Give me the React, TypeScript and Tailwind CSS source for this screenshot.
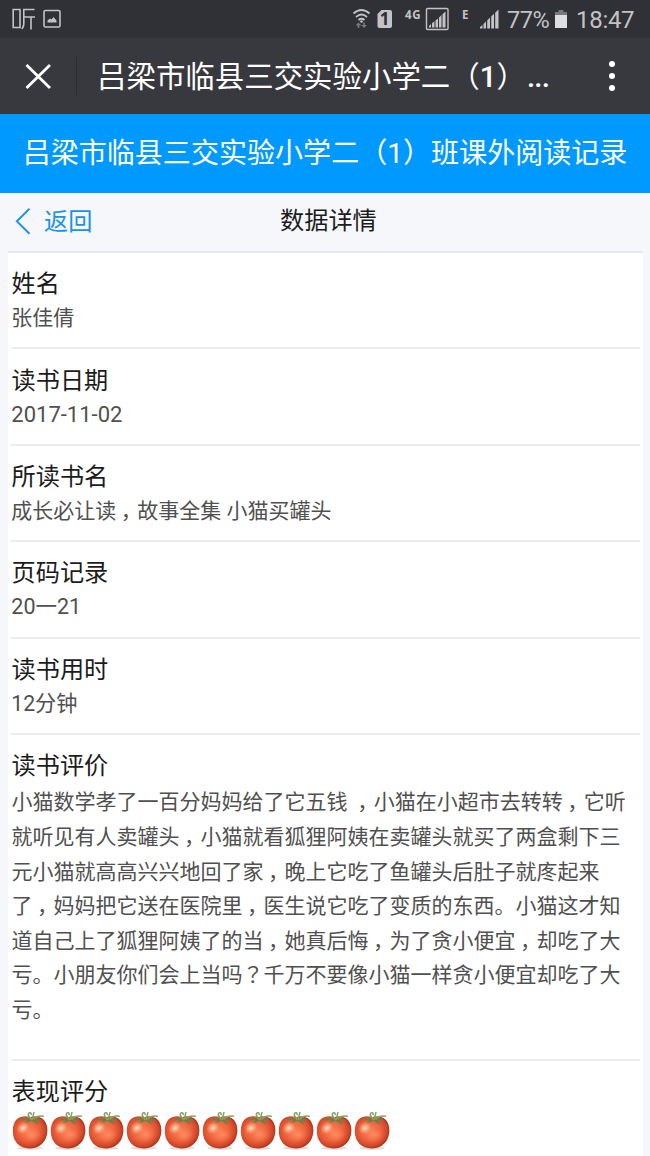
import type { ReactNode } from "react";

const fields = [
  { label: "姓名", value: "张佳倩" },
  { label: "读书日期", value: "2017-11-02", size: "text-[22px]" },
  { label: "所读书名", value: "成长必让读，故事全集 小猫买罐头" },
  { label: "页码记录", value: "20一21", size: "text-[21.500px]" },
  { label: "读书用时", value: "12分钟", size: "text-[21.200px]" },
];

const reviewLines = [
  "小猫数学孝了一百分妈妈给了它五钱 ，小猫在小超市去转转，它听",
  "就听见有人卖罐头，小猫就看狐狸阿姨在卖罐头就买了两盒剩下三",
  "元小猫就高高兴兴地回了家，晚上它吃了鱼罐头后肚子就庝起来",
  "了，妈妈把它送在医院里，医生说它吃了变质的东西。小猫这才知",
  "道自己上了狐狸阿姨了的当，她真后悔，为了贪小便宜，却吃了大",
  "亏。小朋友你们会上当吗？千万不要像小猫一样贪小便宜却吃了大",
  "亏。",
];

// Commas and question marks sit in the middle of their em box.
function Text({ children }: { children: string }) {
  return (
    <>
      {children.split(/([，？])/).map((part, i) => {
        if (part === "，") {
          return (
            <span key={i} className="ml-[4.500px] mr-[6px] [font-feature-settings:'halt']">
              ，
            </span>
          );
        }
        if (part === "？") {
          return (
            <span key={i} className="font-['Noto_Sans_CJK_TC',sans-serif] leading-none" lang="zh-TW">
              ？
            </span>
          );
        }
        return part;
      })}
    </>
  );
}

function Label({ children }: { children: ReactNode }) {
  return <div className="pl-[.500px] text-[24.200px] leading-[36px] text-[#1c1c1c]">{children}</div>;
}

function Tomato() {
  return (
    <svg viewBox="0 0 38 40" className="h-10 w-[38px] shrink-0">
      <ellipse cx="18" cy="37.300" rx="13" ry="1.500" fill="#b9b4b1" opacity=".5" />
      <path
        d="M18 6.300C22 4.500 28 5 32 9C36 13.500 36.400 22 33.500 28C30.500 34 25 37.400 18 37.400C11 37.400 5.500 34.500 2.500 28.500C-.2 22.500 .2 13 4.500 8.500C8.500 4.900 14 4.500 18 6.300Z"
        fill="url(#tomato-skin)"
      />
      <ellipse cx="11" cy="17" rx="7" ry="6" fill="url(#tomato-shine)" transform="rotate(-35 11 17)" />
      <ellipse cx="20" cy="24" rx="10" ry="8" fill="url(#tomato-glow)" />
      <path
        d="M19 8C16 6.300 11 6.700 8 9.300C11 9 13 9.500 15.500 9.600L12.500 11.800C15.500 11.700 17.500 10.700 19.500 9.700C21.500 10.300 23 12.300 26 13.800C25.500 11.500 24.500 10.300 24 9.500C27 9.200 29 9.500 31 10.500C28 7.500 24 6.500 20.500 7.600Z"
        fill="#668348"
      />
      <path
        d="M19.500 8.600C17.500 6 15.300 4.500 16.500 2.600C17.500 1.100 19.500 1.700 19.200 3.600M20.300 8C21 5.500 21.200 3.500 22 1.500M22 8C24 5.500 26 4.500 31.300 5.200"
        fill="none"
        stroke="#86a366"
        strokeWidth="1.500"
        strokeLinecap="round"
      />
    </svg>
  );
}

export default function App() {
  return (
    <div className="flex h-[1156px] w-[650px] flex-col overflow-hidden bg-[#f5f7fa] font-['Roboto','Noto_Sans_CJK_SC',sans-serif]">
      <svg width="0" height="0" className="absolute">
        <defs>
          <radialGradient id="tomato-skin" cx=".45" cy=".45" r=".6">
            <stop offset="0" stopColor="#fa8059" />
            <stop offset=".5" stopColor="#ee633c" />
            <stop offset=".8" stopColor="#d2472a" />
            <stop offset="1" stopColor="#8c2a14" />
          </radialGradient>
          <radialGradient id="tomato-shine">
            <stop offset="0" stopColor="#ffe6c8" />
            <stop offset="1" stopColor="#ffb48a" stopOpacity="0" />
          </radialGradient>
          <radialGradient id="tomato-glow">
            <stop offset="0" stopColor="#ff9468" stopOpacity=".8" />
            <stop offset="1" stopColor="#ff7d50" stopOpacity="0" />
          </radialGradient>
        </defs>
      </svg>

      <div className="flex h-[38px] shrink-0 items-center bg-[#303136] pl-3 text-[#c3c3c5]">
        <svg width="50" height="38" viewBox="0 0 50 38" fill="none" stroke="#c3c3c5" strokeWidth="1.600">
          <path d="M1.200 9.500H8V27.500H1.200ZM22.500 9.500H11.800V24Q11.800 27 9.800 29M12 17H23M19 17V29.500" />
          <rect x="32" y="10.500" width="16" height="16.500" rx="1.500" />
          <path d="M35.500 22.500V20.500L38 18.500L39.500 19.500L41.500 17L44.500 20.500V22.500Z" fill="#c3c3c5" stroke="none" />
        </svg>
        <div className="flex-1" />
        <svg width="154" height="38" viewBox="350 0 154 38" className="shrink-0 font-['Open_Sans']">
          <g fill="none" stroke="#c3c3c5" strokeWidth="1.700">
            <path d="M353.500 13.500Q361.500 6.500 369.500 13.500M356 17Q361.500 12 367 17M358.500 20Q361.500 17.500 364.500 20" />
          </g>
          <circle cx="361.500" cy="21.500" r="1.300" fill="#c3c3c5" />
          <path d="M358.500 22.500L355.500 25.500H357.700V28H359.300V25.500H361.500ZM364 28L361.200 25H363.200V22.500H364.800V25H367Z" fill="#77787b" />
          <path d="M381.500 10H390Q392 10 392 12V26Q392 28 390 28H379.500Q377.500 28 377.500 26V14Z" fill="#c3c3c5" />
          <text x="384.700" y="25" fontSize="17" fontWeight="700" textAnchor="middle" fill="#303136">1</text>
          <text x="405" y="19" fontSize="11.500" fontWeight="700" fill="#c3c3c5" textLength="15.500">4G</text>
          <rect x="426.500" y="8.500" width="21.500" height="21" rx="1" fill="none" stroke="#c3c3c5" strokeWidth="1.400" />
          <path d="M429 27.500V26L431 24V27.500ZM432 27.500V23.200L434.500 21.200V27.500ZM435.500 27.500V20.500L438 18.500V27.500ZM439 27.500V17.500L441.500 15V27.500ZM442.500 27.500V14.300L445.500 11.500V27.500Z" fill="#c3c3c5" />
          <text x="462" y="19" fontSize="11.500" fontWeight="700" fill="#c3c3c5">E</text>
          <path d="M480 28.500V27L482.500 25V28.500ZM483.500 28.500V24L486 21.500V28.500ZM487.200 28.500V20.500L490 17.500V28.500ZM491.200 28.500V16.500L494 13.800V28.500ZM495.200 28.500V12.800L498.500 9.500V28.500Z" fill="#c3c3c5" />
        </svg>
        <div className="w-[49px] pl-[3px] pt-[2px] text-[23.500px] leading-[36px] tracking-[-0.400px]">77%</div>
        <svg width="18" height="38" viewBox="0 0 18 38">
          <path d="M5.500 10H10.500V12H14V15H2V12H5.500Z" fill="#77787b" />
          <path d="M2 15H14V28H2Z" fill="#dedee0" />
        </svg>
        <div className="w-[79px] pl-[5px] pt-[2px] text-[24px] leading-[36px] tracking-[-0.300px]">18:47</div>
      </div>

      <div className="flex h-[76px] shrink-0 items-center bg-[#38393e] text-white">
        <svg width="76" height="76" viewBox="0 0 76 76" fill="none" stroke="#fff" strokeWidth="2.800">
          <path d="M26.500 27L50 50M50 27L26.500 50" />
        </svg>
        <div className="h-[38px] w-px bg-[#2c2d31]" />
        <div className="w-[500px] whitespace-nowrap pl-5 pt-[3px] text-[29.450px] leading-[73px]">
          吕梁市临县三交实验小学二（<span className="font-medium">1</span>）
          <span className="pl-px font-medium tracking-[-0.800px]">...</span>
        </div>
        <div className="flex w-[70px] flex-col items-center gap-[6px]">
          <i className="size-[6px] rounded-full bg-white" />
          <i className="size-[6px] rounded-full bg-white" />
          <i className="size-[6px] rounded-full bg-white" />
        </div>
      </div>

      <div className="flex h-[79px] shrink-0 items-center justify-center whitespace-nowrap bg-[#0099ff] pt-px text-[28.050px] leading-[42px] text-white">
        吕梁市临县三交实验小学二（1）班课外阅读记录
      </div>

      <div className="grid h-[58px] shrink-0 grid-cols-[280px_1fr] items-center text-[24.200px] leading-[36px]">
        <div className="flex items-center gap-3 pl-[15px] text-[#1c93e8]">
          <svg width="17" height="28" viewBox="0 0 17 28" fill="none" stroke="currentColor" strokeWidth="1.900">
            <path d="M14.500 .8L1.800 13.300L14.500 25.800" />
          </svg>
          <span>返回</span>
        </div>
        <div className="pb-[2px] text-[#1c1c1c]">数据详情</div>
      </div>

      <div className="ml-2 mr-[7px] flex-1 border-t-2 border-[#e7e9ec] bg-white px-[3px]">
        {fields.map((field) => (
          <div key={field.label} className="h-[96.400px] border-b-2 border-[#ececee] pt-[13.300px]">
            <Label>{field.label}</Label>
            <div className={`${field.size ?? "text-[21px]"} pl-[.300px] leading-[32.600px] text-[#505050]`}>
              <Text>{field.value}</Text>
            </div>
          </div>
        ))}
        <div className="h-[326px] border-b-2 border-[#ececee] pt-[13.300px]">
          <Label>读书评价</Label>
          <div className="whitespace-pre pl-[.500px] pt-[1px] text-[21px] leading-[34.650px] text-[#505050]">
            {reviewLines.map((line) => (
              <div key={line} className="h-[34.650px]">
                <Text>{line}</Text>
              </div>
            ))}
          </div>
        </div>
        <div className="pt-[13px]">
          <Label>表现评分</Label>
          <div className="flex pl-[.500px] pt-[1.500px]">
            {Array.from({ length: 10 }, (_, i) => (
              <Tomato key={i} />
            ))}
          </div>
        </div>
      </div>
    </div>
  );
}
